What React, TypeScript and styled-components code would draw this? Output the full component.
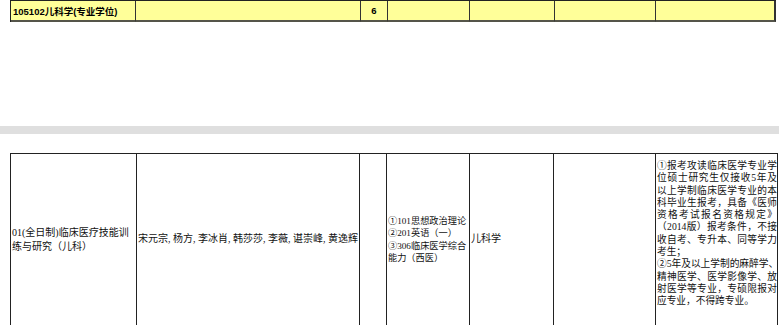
import styled, { createGlobalStyle } from "styled-components";

const GlobalStyle = createGlobalStyle`
  html, body {
    margin: 0;
    padding: 0;
    background: #ffffff;
  }
  body {
    width: 779px;
    height: 325px;
    overflow: hidden;
  }
`;

const Page = styled.div`
  display: flex;
  flex-direction: column;
  width: 779px;
`;

const Section = styled.div<{ $top?: number }>`
  padding-left: 10px;
  margin-top: ${(p) => p.$top ?? 0}px;
`;

const TopRow = styled.div`
  display: grid;
  grid-template-columns: 125px 225px 27px 82px 85px 101px 120px;
  width: 765px;
  border-top: 1px solid #222;
  border-left: 1px solid #222;
  background: #ffff99;
`;

const TopCell = styled.div<{ $center?: boolean; $last?: boolean }>`
  height: 19px;
  display: flex;
  align-items: center;
  justify-content: ${(p) => (p.$center ? "center" : "flex-start")};
  padding-left: ${(p) => (p.$center ? 0 : 2)}px;
  border-right: ${(p) => (p.$last ? 2 : 1)}px solid #333;
  border-bottom: 2px solid #55554a;
  font-family: "Liberation Sans", "Noto Sans CJK SC", sans-serif;
  font-weight: 700;
  font-size: 9.5px;
  color: #000;
  white-space: nowrap;
  box-sizing: content-box;
`;

const Band = styled.div`
  margin-top: 104px;
  height: 8px;
  width: 100%;
  background: #dfdfdf;
`;

const MainRow = styled.div`
  display: grid;
  grid-template-columns: 126px 223px 27px 83px 84px 102px 122px;
  width: 767px;
  border-top: 1px solid #222;
  border-left: 1px solid #222;
  background: #fff;
`;

const Cell = styled.div<{ $top?: boolean; $size?: number }>`
  height: 171px;
  display: flex;
  flex-direction: column;
  justify-content: ${(p) => (p.$top ? "flex-start" : "center")};
  padding: ${(p) => (p.$top ? "6px 0 0 1px" : "0 0 0 1px")};
  border-right: 1px solid #222;
  border-bottom: 1px solid #222;
  font-family: "Liberation Serif", "Noto Sans CJK SC", serif;
  font-size: ${(p) => p.$size ?? 10}px;
  color: #111;
  overflow: hidden;
`;

const Line = styled.span<{ $fill?: boolean; $lh?: number }>`
  display: block;
  white-space: nowrap;
  line-height: ${(p) => p.$lh ?? 12.3}px;
  text-align: justify;
  text-align-last: ${(p) => (p.$fill ? "justify" : "left")};
`;

const requirementLines: [string, boolean][] = [
  ["①报考攻读临床医学专业学", true],
  ["位硕士研究生仅接收5年及", true],
  ["以上学制临床医学专业的本", true],
  ["科毕业生报考，具备《医师", true],
  ["资格考试报名资格规定》", true],
  ["（2014版）报考条件，不接", true],
  ["收自考、专升本、同等学力", true],
  ["考生；", false],
  ["②5年及以上学制的麻醉学、", true],
  ["精神医学、医学影像学、放", true],
  ["射医学等专业，专硕限报对", true],
  ["应专业，不得跨专业。", false],
];

const examLines = ["①101思想政治理论", "②201英语（一）", "③306临床医学综合", "能力（西医）"];

function App() {
  return (
    <Page>
      <GlobalStyle />
      <Section>
        <TopRow>
          <TopCell>105102儿科学(专业学位)</TopCell>
          <TopCell />
          <TopCell $center>6</TopCell>
          <TopCell />
          <TopCell />
          <TopCell />
          <TopCell $last />
        </TopRow>
      </Section>
      <Band />
      <Section $top={19}>
        <MainRow>
          <Cell>
            <Line $lh={14}>01(全日制)临床医疗技能训</Line>
            <Line $lh={14}>练与研究（儿科）</Line>
          </Cell>
          <Cell>
            <Line>宋元宗, 杨方, 李冰肖, 韩莎莎, 李薇, 谌崇峰, 黄逸辉</Line>
          </Cell>
          <Cell />
          <Cell $size={9.2}>
            {examLines.map((l) => (
              <Line key={l}>{l}</Line>
            ))}
          </Cell>
          <Cell>
            <Line>儿科学</Line>
          </Cell>
          <Cell />
          <Cell $top $size={9.7}>
            {requirementLines.map(([text, fill]) => (
              <Line key={text} $fill={fill}>
                {text}
              </Line>
            ))}
          </Cell>
        </MainRow>
      </Section>
    </Page>
  );
}

export default App;
